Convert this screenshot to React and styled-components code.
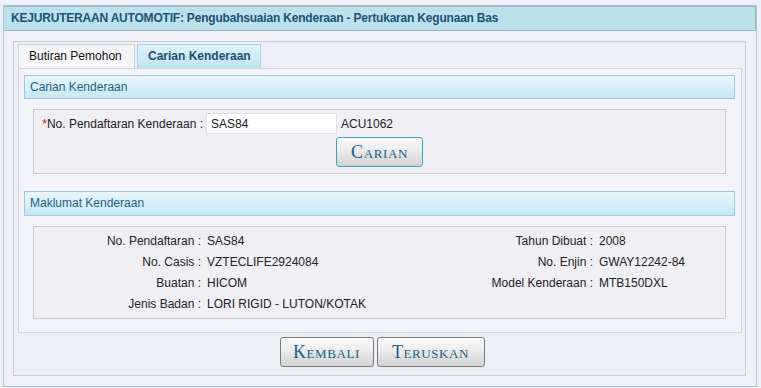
import React from 'react';
import styled, {createGlobalStyle} from 'styled-components';

const GlobalStyle = createGlobalStyle`
  body {
    margin: 0;
    background: #eef0f8;
    font-family: Arial, "Liberation Sans", sans-serif;
    font-size: 12px;
    color: #222;
  }
`;

const Page = styled.div`
  padding: 5px 4px 0 3px;
  height: 383px;
`;

const Panel = styled.div`
  border: 1px solid #aec3da;
  border-bottom-color: #a6bed8;
  background: #eef0f8;
  height: 380px;
  display: flex;
  flex-direction: column;
`;

const TitleBar = styled.div`
  height: 23px;
  line-height: 23px;
  padding-left: 7px;
  background: #bbe1eb;
  border: 1px solid #9fb3c2;
  border-left: none;
  font-weight: bold;
  font-size: 12px;
  letter-spacing: -0.2px;
  color: #1b5279;
`;

const Body = styled.div`
  flex: 1;
  padding: 10px 10px 10px 9px;
  background: #f1f2f9;
  display: flex;
`;

const TabsBox = styled.div`
  flex: 1;
  border: 1px solid #c9cad2;
  background: #eceef8;
  padding: 2px 3px 0 4px;
  display: flex;
  flex-direction: column;
`;

const TabRow = styled.div`
  display: flex;
  gap: 2px;
  height: 24px;
`;

const Tab = styled.div`
  padding: 0 9px 0 10px;
  line-height: 22px;
  border: 1px solid ${p => (p.active ? '#a9d0e2' : '#cfd0d6')};
  border-bottom: none;
  background: ${p => (p.active ? 'linear-gradient(#e0f2fb, #bfe3f2)' : '#f6f6f8')};
  color: ${p => (p.active ? '#1c4f73' : '#111')};
  font-weight: ${p => (p.active ? 'bold' : 'normal')};
  font-size: 12px;
  width: ${p => p.w}px;
  box-sizing: border-box;
`;

const Content = styled.div`
  border: 1px solid #d2d3da;
  background: #f3f4fa;
  height: 257px;
  padding: 6px 6px 0 5px;
`;

const SectionHeader = styled.div`
  height: ${p => p.h}px;
  line-height: ${p => p.h}px;
  padding-left: 5px;
  border: 1px solid #9ec9df;
  background: linear-gradient(#eaf6fc, #c6e7f6);
  color: #245f86;
  font-size: 12px;
  margin-top: ${p => p.gap || 0}px;
`;

const Box = styled.div`
  margin: 10px 9px 0 9px;
  border: 1px solid #cbcbcf;
  background: #efeff4;
`;

const SearchGrid = styled.div`
  display: grid;
  grid-template-columns: 172px 131px 1fr;
  grid-template-rows: 21px 30px;
  row-gap: 3px;
  padding: 3px 0 6px 0;
  align-items: center;
`;

const Label = styled.div`
  text-align: right;
  padding-right: 3px;
  white-space: nowrap;
`;

const Req = styled.span`
  color: #d01010;
`;

const Input = styled.input`
  box-sizing: border-box;
  height: 21px;
  width: 131px;
  border: 1px solid #e2e2e6;
  background: #fff;
  font-family: Arial, "Liberation Sans", sans-serif;
  font-size: 12px;
  padding: 0 4px;
  color: #222;
  outline: none;
`;

const Code = styled.div`
  padding-left: 4px;
`;

const Btn = styled.button`
  box-sizing: border-box;
  height: 30px;
  width: ${p => p.w}px;
  border: 1px solid ${p => (p.focus ? '#3ea3cb' : '#7a7a7a')};
  border-radius: 3px;
  background: linear-gradient(#fbfbfb, #e9e9e9 50%, #d2d2d2);
  color: #1a5f8b;
  font-family: "Liberation Serif", "DejaVu Serif", serif;
  font-variant: small-caps;
  font-size: 18px;
  letter-spacing: 0.6px;
  padding: 0;
  cursor: pointer;
`;

const BtnCell = styled.div`
  margin-left: -1px;
  align-self: start;
`;

const InfoGrid = styled.div`
  display: grid;
  grid-template-columns: 170px 275px 117px 1fr;
  grid-auto-rows: 21px;
  align-items: center;
  padding: 3px 0 4px 0;
`;

const Value = styled.div`
  padding-left: 3px;
  white-space: nowrap;
`;

const Actions = styled.div`
  display: flex;
  justify-content: center;
  gap: 3px;
  padding: 4px 0 0 0;
  margin-left: 4px;
`;

const info = [
  ['No. Pendaftaran', 'SAS84', 'Tahun Dibuat', '2008'],
  ['No. Casis', 'VZTECLIFE2924084', 'No. Enjin', 'GWAY12242-84'],
  ['Buatan', 'HICOM', 'Model Kenderaan', 'MTB150DXL'],
  ['Jenis Badan', 'LORI RIGID - LUTON/KOTAK', '', ''],
];

export default function App() {
  return (
    <>
      <GlobalStyle/>
      <Page>
        <Panel>
          <TitleBar>KEJURUTERAAN AUTOMOTIF: Pengubahsuaian Kenderaan - Pertukaran Kegunaan Bas</TitleBar>
          <Body>
            <TabsBox>
              <TabRow>
                <Tab w={117}>Butiran Pemohon</Tab>
                <Tab w={124} active>Carian Kenderaan</Tab>
              </TabRow>
              <Content>
                <SectionHeader h={22}>Carian Kenderaan</SectionHeader>
                <Box>
                  <SearchGrid>
                    <Label><Req>*</Req>No. Pendaftaran Kenderaan :</Label>
                    <Input defaultValue="SAS84"/>
                    <Code>ACU1062</Code>
                    <div/>
                    <div/>
                    <BtnCell><Btn w={87} focus>Carian</Btn></BtnCell>
                  </SearchGrid>
                </Box>
                <SectionHeader h={23} gap={17}>Maklumat Kenderaan</SectionHeader>
                <Box>
                  <InfoGrid>
                    {info.map(r => (
                      <React.Fragment key={r[0]}>
                        <Label>{r[0]} :</Label>
                        <Value>{r[1]}</Value>
                        <Label>{r[2] && `${r[2]} :`}</Label>
                        <Value>{r[3]}</Value>
                      </React.Fragment>
                    ))}
                  </InfoGrid>
                </Box>
              </Content>
              <Actions>
                <Btn w={94}>Kembali</Btn>
                <Btn w={108}>Teruskan</Btn>
              </Actions>
            </TabsBox>
          </Body>
        </Panel>
      </Page>
    </>
  );
}
